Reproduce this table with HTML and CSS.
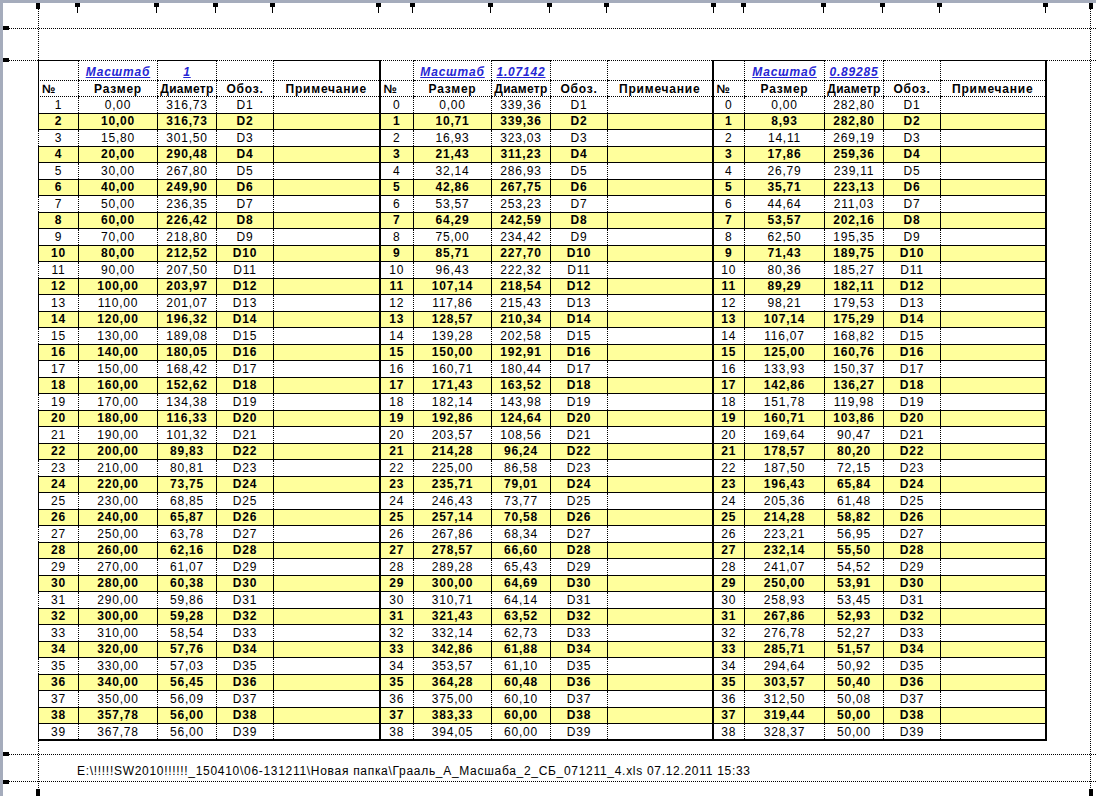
FILE: index.html
```html
<!DOCTYPE html>
<html lang="ru">
<head>
<meta charset="utf-8">
<title>Масштаб</title>
<link rel="stylesheet" href="styles.css">
</head>
<body>
<div class="window">
  <div class="sheet">
    <table class="grid">
      <colgroup>
        <col style="width:40px"><col style="width:79px"><col style="width:59px"><col style="width:57px"><col style="width:106px">
        <col style="width:34px"><col style="width:78px"><col style="width:59px"><col style="width:57px"><col style="width:105px">
        <col style="width:32px"><col style="width:80px"><col style="width:59px"><col style="width:57px"><col style="width:105px">
      </colgroup>
      <tr class="h1"><td></td><td><span class="scale">Масштаб</span></td><td><span class="scale">1</span></td><td></td><td></td><td class="s"></td><td><span class="scale">Масштаб</span></td><td><span class="scale">1.07142</span></td><td></td><td></td><td class="s"></td><td><span class="scale">Масштаб</span></td><td><span class="scale">0.89285</span></td><td></td><td class="top"></td></tr>
      <tr class="h2"><td class="no">№</td><td>Размер</td><td class="dia">Диаметр</td><td>Обоз.</td><td>Примечание</td><td class="s no">№</td><td>Размер</td><td class="dia">Диаметр</td><td>Обоз.</td><td>Примечание</td><td class="s no">№</td><td>Размер</td><td class="dia">Диаметр</td><td>Обоз.</td><td>Примечание</td></tr>
      <tr class="r"><td>1</td><td>0,00</td><td>316,73</td><td>D1</td><td></td><td class="s">0</td><td>0,00</td><td>339,36</td><td>D1</td><td></td><td class="s">0</td><td>0,00</td><td>282,80</td><td>D1</td><td></td></tr>
      <tr class="r y"><td>2</td><td>10,00</td><td>316,73</td><td>D2</td><td></td><td class="s">1</td><td>10,71</td><td>339,36</td><td>D2</td><td></td><td class="s">1</td><td>8,93</td><td>282,80</td><td>D2</td><td></td></tr>
      <tr class="r"><td>3</td><td>15,80</td><td>301,50</td><td>D3</td><td></td><td class="s">2</td><td>16,93</td><td>323,03</td><td>D3</td><td></td><td class="s">2</td><td>14,11</td><td>269,19</td><td>D3</td><td></td></tr>
      <tr class="r y"><td>4</td><td>20,00</td><td>290,48</td><td>D4</td><td></td><td class="s">3</td><td>21,43</td><td>311,23</td><td>D4</td><td></td><td class="s">3</td><td>17,86</td><td>259,36</td><td>D4</td><td></td></tr>
      <tr class="r"><td>5</td><td>30,00</td><td>267,80</td><td>D5</td><td></td><td class="s">4</td><td>32,14</td><td>286,93</td><td>D5</td><td></td><td class="s">4</td><td>26,79</td><td>239,11</td><td>D5</td><td></td></tr>
      <tr class="r y"><td>6</td><td>40,00</td><td>249,90</td><td>D6</td><td></td><td class="s">5</td><td>42,86</td><td>267,75</td><td>D6</td><td></td><td class="s">5</td><td>35,71</td><td>223,13</td><td>D6</td><td></td></tr>
      <tr class="r"><td>7</td><td>50,00</td><td>236,35</td><td>D7</td><td></td><td class="s">6</td><td>53,57</td><td>253,23</td><td>D7</td><td></td><td class="s">6</td><td>44,64</td><td>211,03</td><td>D7</td><td></td></tr>
      <tr class="r y"><td>8</td><td>60,00</td><td>226,42</td><td>D8</td><td></td><td class="s">7</td><td>64,29</td><td>242,59</td><td>D8</td><td></td><td class="s">7</td><td>53,57</td><td>202,16</td><td>D8</td><td></td></tr>
      <tr class="r"><td>9</td><td>70,00</td><td>218,80</td><td>D9</td><td></td><td class="s">8</td><td>75,00</td><td>234,42</td><td>D9</td><td></td><td class="s">8</td><td>62,50</td><td>195,35</td><td>D9</td><td></td></tr>
      <tr class="r y"><td>10</td><td>80,00</td><td>212,52</td><td>D10</td><td></td><td class="s">9</td><td>85,71</td><td>227,70</td><td>D10</td><td></td><td class="s">9</td><td>71,43</td><td>189,75</td><td>D10</td><td></td></tr>
      <tr class="r"><td>11</td><td>90,00</td><td>207,50</td><td>D11</td><td></td><td class="s">10</td><td>96,43</td><td>222,32</td><td>D11</td><td></td><td class="s">10</td><td>80,36</td><td>185,27</td><td>D11</td><td></td></tr>
      <tr class="r y"><td>12</td><td>100,00</td><td>203,97</td><td>D12</td><td></td><td class="s">11</td><td>107,14</td><td>218,54</td><td>D12</td><td></td><td class="s">11</td><td>89,29</td><td>182,11</td><td>D12</td><td></td></tr>
      <tr class="r"><td>13</td><td>110,00</td><td>201,07</td><td>D13</td><td></td><td class="s">12</td><td>117,86</td><td>215,43</td><td>D13</td><td></td><td class="s">12</td><td>98,21</td><td>179,53</td><td>D13</td><td></td></tr>
      <tr class="r y"><td>14</td><td>120,00</td><td>196,32</td><td>D14</td><td></td><td class="s">13</td><td>128,57</td><td>210,34</td><td>D14</td><td></td><td class="s">13</td><td>107,14</td><td>175,29</td><td>D14</td><td></td></tr>
      <tr class="r"><td>15</td><td>130,00</td><td>189,08</td><td>D15</td><td></td><td class="s">14</td><td>139,28</td><td>202,58</td><td>D15</td><td></td><td class="s">14</td><td>116,07</td><td>168,82</td><td>D15</td><td></td></tr>
      <tr class="r y"><td>16</td><td>140,00</td><td>180,05</td><td>D16</td><td></td><td class="s">15</td><td>150,00</td><td>192,91</td><td>D16</td><td></td><td class="s">15</td><td>125,00</td><td>160,76</td><td>D16</td><td></td></tr>
      <tr class="r"><td>17</td><td>150,00</td><td>168,42</td><td>D17</td><td></td><td class="s">16</td><td>160,71</td><td>180,44</td><td>D17</td><td></td><td class="s">16</td><td>133,93</td><td>150,37</td><td>D17</td><td></td></tr>
      <tr class="r y"><td>18</td><td>160,00</td><td>152,62</td><td>D18</td><td></td><td class="s">17</td><td>171,43</td><td>163,52</td><td>D18</td><td></td><td class="s">17</td><td>142,86</td><td>136,27</td><td>D18</td><td></td></tr>
      <tr class="r"><td>19</td><td>170,00</td><td>134,38</td><td>D19</td><td></td><td class="s">18</td><td>182,14</td><td>143,98</td><td>D19</td><td></td><td class="s">18</td><td>151,78</td><td>119,98</td><td>D19</td><td></td></tr>
      <tr class="r y"><td>20</td><td>180,00</td><td>116,33</td><td>D20</td><td></td><td class="s">19</td><td>192,86</td><td>124,64</td><td>D20</td><td></td><td class="s">19</td><td>160,71</td><td>103,86</td><td>D20</td><td></td></tr>
      <tr class="r"><td>21</td><td>190,00</td><td>101,32</td><td>D21</td><td></td><td class="s">20</td><td>203,57</td><td>108,56</td><td>D21</td><td></td><td class="s">20</td><td>169,64</td><td>90,47</td><td>D21</td><td></td></tr>
      <tr class="r y"><td>22</td><td>200,00</td><td>89,83</td><td>D22</td><td></td><td class="s">21</td><td>214,28</td><td>96,24</td><td>D22</td><td></td><td class="s">21</td><td>178,57</td><td>80,20</td><td>D22</td><td></td></tr>
      <tr class="r"><td>23</td><td>210,00</td><td>80,81</td><td>D23</td><td></td><td class="s">22</td><td>225,00</td><td>86,58</td><td>D23</td><td></td><td class="s">22</td><td>187,50</td><td>72,15</td><td>D23</td><td></td></tr>
      <tr class="r y"><td>24</td><td>220,00</td><td>73,75</td><td>D24</td><td></td><td class="s">23</td><td>235,71</td><td>79,01</td><td>D24</td><td></td><td class="s">23</td><td>196,43</td><td>65,84</td><td>D24</td><td></td></tr>
      <tr class="r"><td>25</td><td>230,00</td><td>68,85</td><td>D25</td><td></td><td class="s">24</td><td>246,43</td><td>73,77</td><td>D25</td><td></td><td class="s">24</td><td>205,36</td><td>61,48</td><td>D25</td><td></td></tr>
      <tr class="r y"><td>26</td><td>240,00</td><td>65,87</td><td>D26</td><td></td><td class="s">25</td><td>257,14</td><td>70,58</td><td>D26</td><td></td><td class="s">25</td><td>214,28</td><td>58,82</td><td>D26</td><td></td></tr>
      <tr class="r"><td>27</td><td>250,00</td><td>63,78</td><td>D27</td><td></td><td class="s">26</td><td>267,86</td><td>68,34</td><td>D27</td><td></td><td class="s">26</td><td>223,21</td><td>56,95</td><td>D27</td><td></td></tr>
      <tr class="r y"><td>28</td><td>260,00</td><td>62,16</td><td>D28</td><td></td><td class="s">27</td><td>278,57</td><td>66,60</td><td>D28</td><td></td><td class="s">27</td><td>232,14</td><td>55,50</td><td>D28</td><td></td></tr>
      <tr class="r"><td>29</td><td>270,00</td><td>61,07</td><td>D29</td><td></td><td class="s">28</td><td>289,28</td><td>65,43</td><td>D29</td><td></td><td class="s">28</td><td>241,07</td><td>54,52</td><td>D29</td><td></td></tr>
      <tr class="r y"><td>30</td><td>280,00</td><td>60,38</td><td>D30</td><td></td><td class="s">29</td><td>300,00</td><td>64,69</td><td>D30</td><td></td><td class="s">29</td><td>250,00</td><td>53,91</td><td>D30</td><td></td></tr>
      <tr class="r"><td>31</td><td>290,00</td><td>59,86</td><td>D31</td><td></td><td class="s">30</td><td>310,71</td><td>64,14</td><td>D31</td><td></td><td class="s">30</td><td>258,93</td><td>53,45</td><td>D31</td><td></td></tr>
      <tr class="r y"><td>32</td><td>300,00</td><td>59,28</td><td>D32</td><td></td><td class="s">31</td><td>321,43</td><td>63,52</td><td>D32</td><td></td><td class="s">31</td><td>267,86</td><td>52,93</td><td>D32</td><td></td></tr>
      <tr class="r"><td>33</td><td>310,00</td><td>58,54</td><td>D33</td><td></td><td class="s">32</td><td>332,14</td><td>62,73</td><td>D33</td><td></td><td class="s">32</td><td>276,78</td><td>52,27</td><td>D33</td><td></td></tr>
      <tr class="r y"><td>34</td><td>320,00</td><td>57,76</td><td>D34</td><td></td><td class="s">33</td><td>342,86</td><td>61,88</td><td>D34</td><td></td><td class="s">33</td><td>285,71</td><td>51,57</td><td>D34</td><td></td></tr>
      <tr class="r"><td>35</td><td>330,00</td><td>57,03</td><td>D35</td><td></td><td class="s">34</td><td>353,57</td><td>61,10</td><td>D35</td><td></td><td class="s">34</td><td>294,64</td><td>50,92</td><td>D35</td><td></td></tr>
      <tr class="r y"><td>36</td><td>340,00</td><td>56,45</td><td>D36</td><td></td><td class="s">35</td><td>364,28</td><td>60,48</td><td>D36</td><td></td><td class="s">35</td><td>303,57</td><td>50,40</td><td>D36</td><td></td></tr>
      <tr class="r"><td>37</td><td>350,00</td><td>56,09</td><td>D37</td><td></td><td class="s">36</td><td>375,00</td><td>60,10</td><td>D37</td><td></td><td class="s">36</td><td>312,50</td><td>50,08</td><td>D37</td><td></td></tr>
      <tr class="r y"><td>38</td><td>357,78</td><td>56,00</td><td>D38</td><td></td><td class="s">37</td><td>383,33</td><td>60,00</td><td>D38</td><td></td><td class="s">37</td><td>319,44</td><td>50,00</td><td>D38</td><td></td></tr>
      <tr class="r last"><td>39</td><td>367,78</td><td>56,00</td><td>D39</td><td></td><td class="s">38</td><td>394,05</td><td>60,00</td><td>D39</td><td></td><td class="s">38</td><td>328,37</td><td>50,00</td><td>D39</td><td></td></tr>
    </table>
    <div class="footer">E:\!!!!!SW2010!!!!!!_150410\06-131211\Новая папка\Грааль_А_Масшаба_2_СБ_071211_4.xls 07.12.2011 15:33</div>
  </div>

  <div class="guide h" style="top:25px"></div>
  <div class="guide h" style="top:57px"></div>
  <div class="guide h" style="top:751px"></div>
  <div class="guide h" style="top:778px"></div>
  <div class="guide v" style="left:35px"></div>
  <div class="guide v" style="left:1087px"></div>

  <div class="mh side" style="top:23px"></div>
  <div class="mh side" style="top:55px"></div>
  <div class="mh side" style="top:749px"></div>
  <div class="mh side" style="top:777px"></div>
  <div class="mh topm" style="left:33px"></div>
  <div class="mh topm" style="left:1086px"></div>
  <div class="mh botm" style="left:33px"></div>
  <div class="mh botm" style="left:1086px"></div>

  <div class="ch" style="left:72px"></div>
  <div class="ch" style="left:151px"></div>
  <div class="ch" style="left:210px"></div>
  <div class="ch" style="left:267px"></div>
  <div class="ch" style="left:373px"></div>
  <div class="ch" style="left:407px"></div>
  <div class="ch" style="left:485px"></div>
  <div class="ch" style="left:544px"></div>
  <div class="ch" style="left:601px"></div>
  <div class="ch" style="left:708px"></div>
  <div class="ch" style="left:738px"></div>
  <div class="ch" style="left:818px"></div>
  <div class="ch" style="left:877px"></div>
  <div class="ch" style="left:934px"></div>
  <div class="ch" style="left:1040px"></div>
</div>
</body>
</html>
```

FILE: styles.css
```css
* { box-sizing: border-box; }
html, body { margin: 0; padding: 0; background: #fff; }
body {
  width: 1096px;
  height: 796px;
  overflow: hidden;
  font-family: "Liberation Sans", Arial, sans-serif;
  color: #000;
}
.window {
  position: relative;
  width: 1096px;
  height: 796px;
  border-top: 3px solid #a5acbc;
  border-left: 3px solid #a5acbc;
}
.sheet {
  padding: 57px 0 0 35px;
}
.grid {
  border-collapse: collapse;
  table-layout: fixed;
  width: 1007px;
  font-size: 12px;
  letter-spacing: 0.8px;
}
.grid td {
  padding: 0;
  text-align: center;
  vertical-align: middle;
  white-space: nowrap;
  overflow: hidden;
  line-height: 14px;
  border-left: 1px dotted #000;
}
.grid .h1 { height: 20px; }
.grid .h1 td {
  border-top: 1px dotted #000;
  border-bottom: 1px dotted #000;
  vertical-align: bottom;
  padding-bottom: 1px;
}
.grid .h2 { height: 16px; }
.grid .h2 td {
  font-weight: bold;
  border-bottom: 1px dotted #000;
}
.grid .h2 td.no { text-align: left; padding-left: 3px; }
.grid .h2 td.dia { letter-spacing: 0.3px; }
.grid .r { height: 16.5px; }
.grid .y td {
  background: #ffff9c;
  font-weight: bold;
  border: 1px solid #000;
}
.grid td.s { border-left: 2px solid #000; }
.grid td:last-child { border-right: 2px solid #000; }
.grid .last td { border-bottom: 2px solid #000; }
.grid .h1 td.top { border-top: 1px solid #000; }
.scale {
  color: #2626d4;
  font-style: italic;
  font-weight: bold;
  text-decoration: underline;
}
.footer {
  margin-top: 13px;
  height: 27px;
  padding: 10px 0 0 39px;
  font-size: 12px;
  line-height: 14px;
  letter-spacing: 0.7px;
  white-space: nowrap;
}
.guide { position: absolute; }
.guide.h { left: 6px; right: 0; height: 0; border-top: 1px dotted #000; }
.guide.v { top: 0; bottom: 0; width: 0; border-left: 1px dotted #000; }
.mh { position: absolute; background: #000; }
.mh.side { left: 0; width: 6px; height: 4px; }
.mh.topm { top: 0; width: 4px; height: 6px; }
.mh.botm { bottom: 0; width: 4px; height: 7px; }
.ch {
  position: absolute;
  top: 0;
  width: 5px;
  height: 4px;
  background: #000;
}
.ch::after {
  content: "";
  position: absolute;
  left: 2px;
  top: 4px;
  width: 1px;
  height: 6px;
  background: #000;
}
```
